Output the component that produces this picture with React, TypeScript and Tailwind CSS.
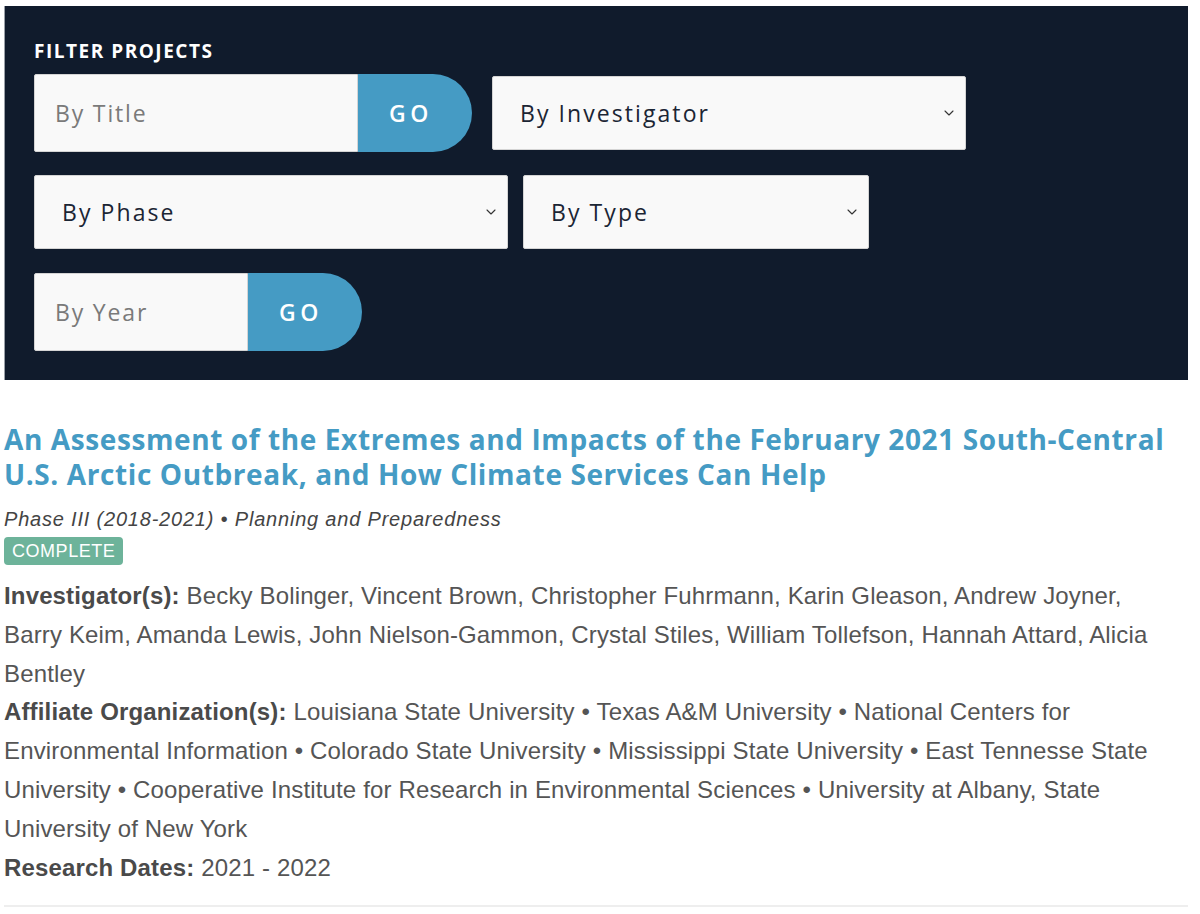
import { ChevronDown } from "lucide-react";

const heading = { fontFamily: '"Open Sans", Inter, sans-serif' };
const body = { fontFamily: '"Liberation Sans", Arial, sans-serif' };

function TextGo({ placeholder, inputW }: { placeholder: string; inputW: string }) {
  return (
    <div className="flex h-[78px]">
      <input
        placeholder={placeholder}
        style={heading}
        className={`${inputW} h-full rounded-l-[2px] border border-[#d4d4d4] bg-[#f9f9f9] px-5 text-[23px] tracking-[0.08em] text-[#333] placeholder:text-[#7a7a7a] outline-none`}
      />
      <button
        style={heading}
        className="h-full w-[114px] rounded-r-[40px] bg-[#459bc4] pr-2 text-[23px] font-semibold tracking-[0.2em] text-white"
      >
        GO
      </button>
    </div>
  );
}

function Select({ label, w }: { label: string; w: string }) {
  return (
    <div className={`${w} relative flex h-[74px] items-center rounded-[2px] border border-[#d4d4d4] bg-[#f9f9f9] pl-[27px]`}>
      <span style={heading} className="text-[23px] font-medium tracking-[0.09em] text-[#1b2534]">{label}</span>
      <ChevronDown className="absolute right-[8px] top-1/2 h-4 w-4 -translate-y-1/2 text-[#333]" strokeWidth={1.6} />
    </div>
  );
}

export default function App() {
  return (
    <div className="min-h-[914px] bg-white pt-[6px]">
      <div className="ml-[4px] w-[1184px] border-l border-[#9aa0a8] bg-[#101b2c] pl-[29px] pt-[32px] pb-[29px]">
        <h2 style={heading} className="text-[19px] font-bold leading-[27px] tracking-[0.08em] text-white">FILTER PROJECTS</h2>
        <div className="mt-[9px] flex items-center gap-5">
          <TextGo placeholder="By Title" inputW="w-[324px]" />
          <Select label="By Investigator" w="w-[474px]" />
        </div>
        <div className="mt-[23px] flex items-center gap-[15px]">
          <Select label="By Phase" w="w-[474px]" />
          <Select label="By Type" w="w-[346px]" />
        </div>
        <div className="mt-[24px] flex items-center">
          <TextGo placeholder="By Year" inputW="w-[214px]" />
        </div>
      </div>

      <div className="ml-[4px] w-[1190px] pt-[42px]">
        <h1 style={heading} className="text-[28px] font-bold leading-[35px] tracking-[0.6px] text-[#459bc4]">
          An Assessment of the Extremes and Impacts of the February 2021 South-Central<br />
          U.S. Arctic Outbreak, and How Climate Services Can Help
        </h1>
        <p style={body} className="mt-[16px] text-[20px] italic leading-[22px] tracking-[0.04em] text-[#444]">
          Phase III (2018-2021) • Planning and Preparedness
        </p>
        <span style={body} className="mt-[7px] inline-block rounded-[4px] bg-[#6db39a] px-[8px] text-[18px] leading-[28px] tracking-[0.03em] text-white">
          COMPLETE
        </span>
        <div style={body} className="mt-[12px] text-[24px] leading-[38.8px] tracking-[0.15px] text-[#555]">
          <p>
            <b className="font-bold text-[#4a4a4a]">Investigator(s):</b> Becky Bolinger, Vincent Brown, Christopher Fuhrmann, Karin Gleason, Andrew Joyner,<br />
            Barry Keim, Amanda Lewis, John Nielson-Gammon, Crystal Stiles, William Tollefson, Hannah Attard, Alicia<br />
            Bentley
          </p>
          <p>
            <b className="font-bold text-[#4a4a4a]">Affiliate Organization(s):</b> Louisiana State University • Texas A&amp;M University • National Centers for<br />
            Environmental Information • Colorado State University • Mississippi State University • East Tennesse State<br />
            University • Cooperative Institute for Research in Environmental Sciences • University at Albany, State<br />
            University of New York
          </p>
          <p>
            <b className="font-bold text-[#4a4a4a]">Research Dates:</b> 2021 - 2022
          </p>
        </div>
        <div className="mt-[18px] h-[2px] w-[1184px] bg-[#eeeeee]" />
      </div>
    </div>
  );
}
